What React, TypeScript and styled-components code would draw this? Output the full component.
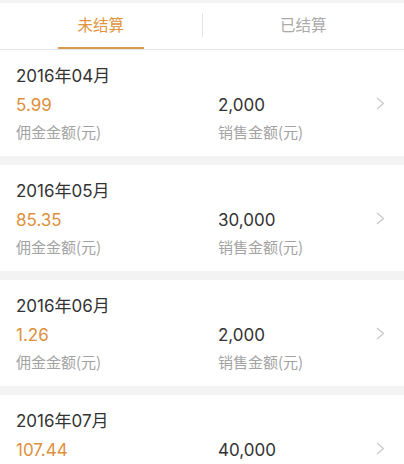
import React from "react";
import styled, { createGlobalStyle } from "styled-components";

const Global = createGlobalStyle`
  html, body { margin: 0; padding: 0; background: #f3f3f3; }
  body { font-family: "Noto Sans CJK SC", "Noto Sans", sans-serif; -webkit-font-smoothing: antialiased; }
  * { box-sizing: border-box; }
`;

const Page = styled.div`
  width: 404px;
  padding-top: 3px;
  display: flex;
  flex-direction: column;
`;

const TabBar = styled.div`
  display: flex;
  height: 47px;
  background: #fff;
  border-bottom: 1px solid #e6e6e6;
`;

const Tab = styled.div<{ $active?: boolean }>`
  flex: 1;
  display: flex;
  flex-direction: column;
  align-items: center;
  color: ${(p) => (p.$active ? "#e0943c" : "#aaaaaa")};
  font-size: 15.5px;
`;

const TabLabel = styled.div`
  flex: 1;
  display: flex;
  align-items: center;
  padding-bottom: 2px;
`;

const Underline = styled.div<{ $active?: boolean }>`
  width: 86px;
  height: 2px;
  background: ${(p) => (p.$active ? "#d89a4c" : "transparent")};
`;

const TabDivider = styled.div`
  width: 1px;
  height: 24px;
  margin-top: 10px;
  background: #e4e4e4;
`;

const List = styled.div`
  display: flex;
  flex-direction: column;
  gap: 9px;
`;

const Card = styled.div`
  background: #fff;
  height: 106px;
  padding: 14px 19px 0 16px;
  display: grid;
  grid-template-columns: 202px 1fr auto;
  grid-template-rows: 24px 24px 20px;
  row-gap: 5px;
  align-items: center;
`;

const numberFont = `"Inter", "Noto Sans CJK SC", sans-serif`;

const DateText = styled.div`
  grid-column: 1 / 4;
  font-family: ${numberFont};
  font-size: 17px;
  color: #333;
  line-height: 24px;
`;

const Value = styled.div<{ $accent?: boolean }>`
  font-family: ${numberFont};
  font-size: 17px;
  line-height: 24px;
  color: ${(p) => (p.$accent ? "#dd8f3a" : "#333")};
`;

const Caption = styled.div`
  font-size: 15px;
  line-height: 20px;
  color: #a3a3a3;
`;

const Chevron = styled.div`
  grid-row: 2;
  grid-column: 3;
  display: flex;
  align-items: center;
  margin-top: -3px;
`;

const items = [
  { date: "2016年04月", commission: "5.99", sales: "2,000" },
  { date: "2016年05月", commission: "85.35", sales: "30,000" },
  { date: "2016年06月", commission: "1.26", sales: "2,000" },
  { date: "2016年07月", commission: "107.44", sales: "40,000" },
];

export default function App() {
  return (
    <Page>
      <Global />
      <TabBar>
        <Tab $active>
          <TabLabel>未结算</TabLabel>
          <Underline $active />
        </Tab>
        <TabDivider />
        <Tab>
          <TabLabel>已结算</TabLabel>
          <Underline />
        </Tab>
      </TabBar>
      <List>
        {items.map((it) => (
          <Card key={it.date}>
            <DateText>{it.date}</DateText>
            <Value $accent>{it.commission}</Value>
            <Value>{it.sales}</Value>
            <Chevron>
              <svg width="9" height="13" viewBox="0 0 9 13">
                <polyline points="1,1 7.5,6.5 1,12" fill="none" stroke="#c8c8c8" strokeWidth="1.2" />
              </svg>
            </Chevron>
            <Caption>佣金金额(元)</Caption>
            <Caption>销售金额(元)</Caption>
          </Card>
        ))}
      </List>
    </Page>
  );
}
